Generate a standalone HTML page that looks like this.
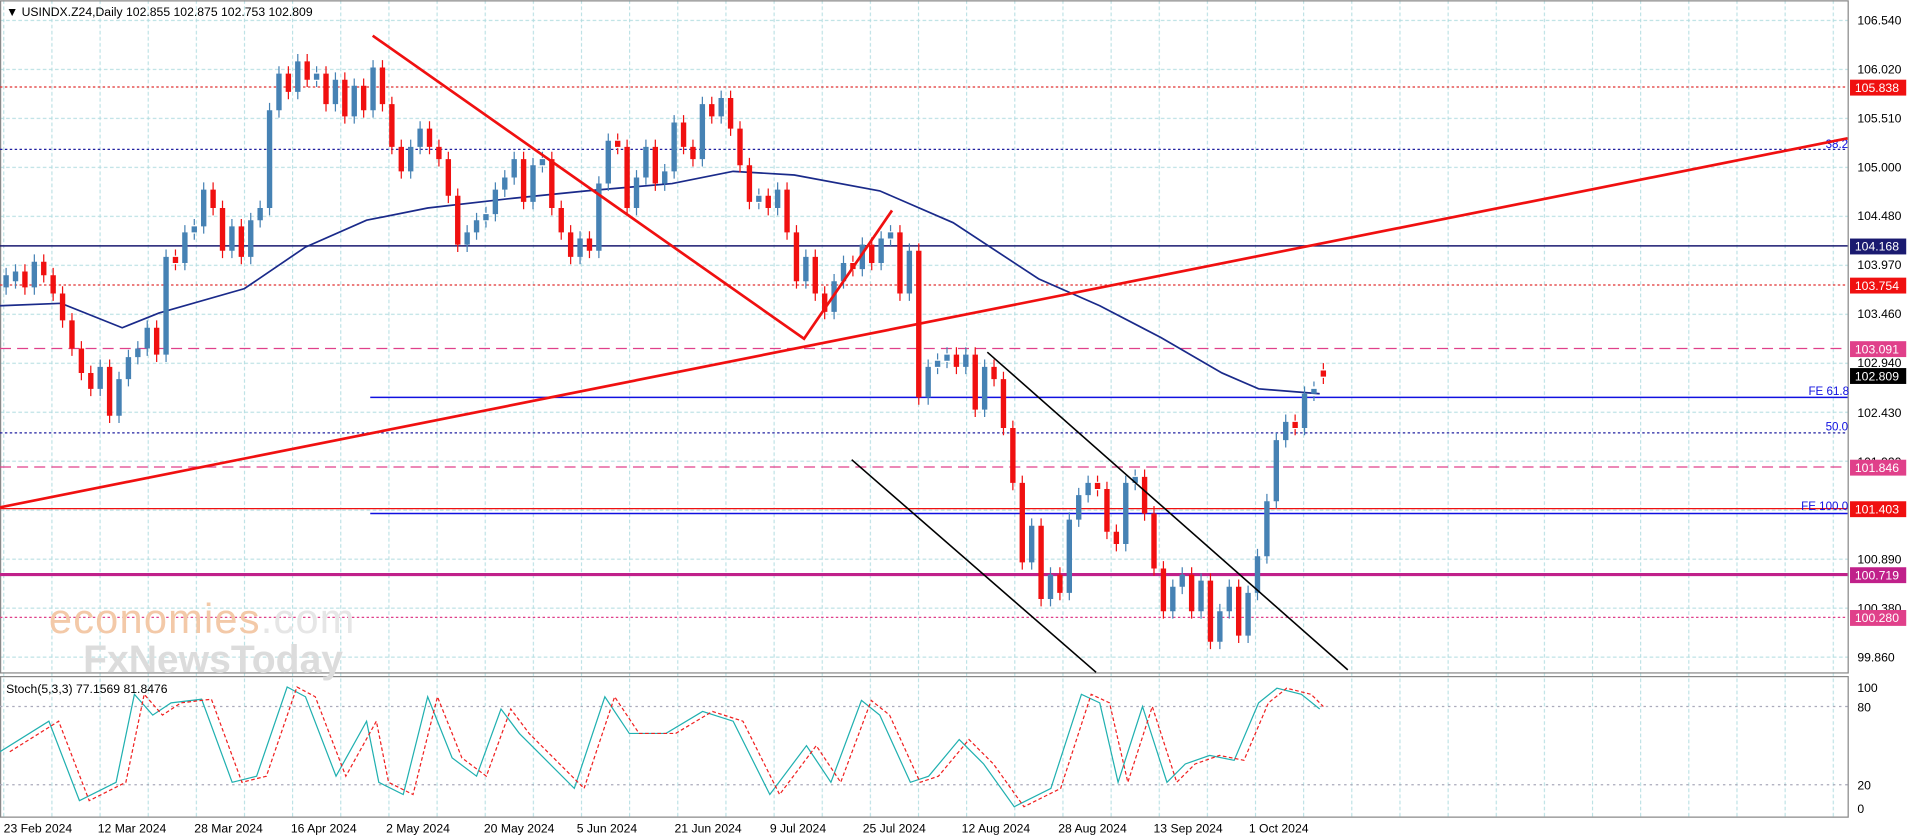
<!DOCTYPE html>
<html><head><meta charset="utf-8"><style>
html,body{margin:0;padding:0;background:#fff;overflow:hidden}
svg{display:block;font-family:"Liberation Sans",sans-serif}
</style></head><body>
<svg width="1916" height="840" viewBox="0 0 1568 687" xmlns="http://www.w3.org/2000/svg">
<defs>
<pattern id="gv" patternUnits="userSpaceOnUse" x="42" y="0" width="39.4" height="687"><line x1="0.5" y1="0" x2="0.5" y2="687" stroke="#b0dce0" stroke-width="0.8" stroke-dasharray="3,2"/></pattern>
<pattern id="gh" patternUnits="userSpaceOnUse" x="0" y="16" width="1512" height="40.08"><line x1="0" y1="0.5" x2="1512" y2="0.5" stroke="#b0dce0" stroke-width="0.8" stroke-dasharray="3,2"/></pattern>
<path id="bb" d="M5,225V235 M12.7,222V230 M28.1,214V235 M82,300V318 M97.4,310V340 M105.1,292V310 M112.8,285V292 M120.5,268V285 M135.9,210V290 M151.3,190V215 M159,185V190 M166.7,155V185 M189.8,185V205 M205.2,180V210 M212.9,170V180 M220.6,90V170 M228.3,60V90 M243.7,50V75 M259.1,60V65 M274.5,65V85 M289.9,70V95 M305.3,55V90 M336.1,120V140 M343.8,105V120 M382.3,190V200 M390,180V190 M397.7,175V180 M405.4,155V175 M413.1,145V155 M420.8,130V145 M436.2,135V165 M443.9,130V135 M474.7,195V210 M490.1,150V205 M497.8,115V150 M520.9,145V170 M528.6,120V145 M544,140V150 M551.7,100V140 M574.8,85V130 M590.2,80V95 M621,160V165 M636.4,155V170 M659.5,210V230 M682.6,230V255 M690.3,215V230 M705.7,200V220 M721.1,195V215 M728.8,190V195 M744.2,205V240 M759.6,300V325 M767.3,295V300 M775,290V295 M790.4,290V300 M805.8,300V335 M844.3,430V460 M859.7,470V490 M875.1,425V485 M882.8,405V425 M890.5,395V405 M921.3,395V445 M929,390V395 M959.8,480V500 M967.5,470V480 M982.9,475V500 M998.3,500V525 M1006,480V500 M1021.4,485V520 M1029.1,455V485 M1036.8,410V455 M1044.5,360V410 M1052.2,345V360 M1067.6,322V350 M1075.3,318V322"/>
<path id="rb" d="M20.4,222V235 M35.8,214V225 M43.5,225V240 M51.2,240V262 M58.9,262V285 M66.6,285V305 M74.3,305V318 M89.7,300V340 M128.2,268V290 M143.6,210V215 M174.4,155V170 M182.1,170V205 M197.5,185V210 M236,60V75 M251.4,50V65 M266.8,60V85 M282.2,65V95 M297.6,70V90 M313,55V85 M320.7,85V120 M328.4,120V140 M351.5,105V120 M359.2,120V130 M366.9,130V160 M374.6,160V200 M428.5,130V165 M451.6,130V170 M459.3,170V190 M467,190V210 M482.4,195V205 M505.5,115V120 M513.2,120V170 M536.3,120V150 M559.4,100V120 M567.1,120V130 M582.5,85V95 M597.9,80V105 M605.6,105V135 M613.3,135V165 M628.7,160V170 M644.1,155V190 M651.8,190V230 M667.2,210V240 M674.9,240V255 M698,215V220 M713.4,200V215 M736.5,190V240 M751.9,205V325 M782.7,290V300 M798.1,290V335 M813.5,300V310 M821.2,310V350 M828.9,350V395 M836.6,395V460 M852,430V490 M867.4,470V485 M898.2,395V400 M905.9,400V435 M913.6,435V445 M936.7,390V420 M944.4,420V465 M952.1,465V500 M975.2,470V500 M990.6,475V525 M1013.7,480V520 M1059.9,345V350 M1083,303V308"/>
</defs>
<rect width="1568" height="687" fill="#fff"/>
<rect x="0" y="0" width="1512" height="550" fill="url(#gh)"/>
<rect x="0" y="0" width="1512" height="668" fill="url(#gv)"/>
<rect x="0.5" y="0.5" width="1512" height="550" fill="none" stroke="#888"/>
<rect x="0.5" y="553.5" width="1512" height="115" fill="none" stroke="#888"/>
<line x1="0" y1="71" x2="1512" y2="71" stroke="#e03030" stroke-dasharray="2,2"/>
<line x1="0" y1="122" x2="1512" y2="122" stroke="#2020a0" stroke-dasharray="2,2"/>
<line x1="0" y1="201" x2="1512" y2="201" stroke="#1a1a70" stroke-width="1.3"/>
<line x1="0" y1="233" x2="1512" y2="233" stroke="#e03030" stroke-dasharray="2,2"/>
<line x1="0" y1="285" x2="1512" y2="285" stroke="#e0408a" stroke-dasharray="9,5"/>
<line x1="303" y1="325" x2="1512" y2="325" stroke="#1010e0" stroke-width="1.2"/>
<line x1="0" y1="354" x2="1512" y2="354" stroke="#2020a0" stroke-dasharray="2,2"/>
<line x1="0" y1="382" x2="1512" y2="382" stroke="#e0408a" stroke-dasharray="9,5"/>
<line x1="0" y1="416" x2="1512" y2="416" stroke="#f01010"/>
<line x1="303" y1="420" x2="1512" y2="420" stroke="#1010e0" stroke-width="1.2"/>
<line x1="0" y1="470" x2="1512" y2="470" stroke="#c0208a" stroke-width="2.5"/>
<line x1="0" y1="505" x2="1512" y2="505" stroke="#e0408a" stroke-dasharray="2,2"/>
<g font-size="9.5" fill="#1010e0">
<text x="1494" y="121">38.2</text>
<text x="1480" y="323">FE 61.8</text>
<text x="1494" y="352">50.0</text>
<text x="1474" y="417">FE 100.0</text>
</g>
<text x="40" y="518" font-size="34" fill="#f3c9a8" letter-spacing="1">economies<tspan fill="#e6e6e6">.com</tspan></text>
<text x="68" y="550" font-size="32" fill="#dcdcdc" font-weight="bold">FxNewsToday</text>
<polyline fill="none" stroke="#1a2a8a" stroke-width="1.4" points="0,250 50,248 100,268 130,256 200,236 250,202 300,180 350,170 420,162 480,156 550,150 600,140 650,143 720,156 780,182 850,228 900,250 950,276 1000,305 1030,318 1080,322"/>
<use href="#bb" transform="translate(0,-6)" fill="none" stroke="#4682b4" stroke-width="1"/>
<use href="#bb" transform="translate(0,6)" fill="none" stroke="#4682b4" stroke-width="1"/>
<use href="#rb" transform="translate(0,-6)" fill="none" stroke="#f01010" stroke-width="1"/>
<use href="#rb" transform="translate(0,6)" fill="none" stroke="#f01010" stroke-width="1"/>
<use href="#bb" fill="none" stroke="#4682b4" stroke-width="4.4"/>
<use href="#rb" fill="none" stroke="#f01010" stroke-width="4.4"/>
<line x1="0" y1="415" x2="1512" y2="113" stroke="#f01010" stroke-width="2.2"/>
<polyline fill="none" stroke="#f01010" stroke-width="2.2" points="305,29 658,277 730,172"/>
<line x1="808" y1="288" x2="1103" y2="548" stroke="#000" stroke-width="1.3"/>
<line x1="697" y1="376" x2="897" y2="550" stroke="#000" stroke-width="1.3"/>
<line x1="0" y1="578" x2="1512" y2="578" stroke="#aab" stroke-dasharray="2,3"/>
<line x1="0" y1="642" x2="1512" y2="642" stroke="#aab" stroke-dasharray="2,3"/>
<polyline fill="none" stroke="#20b0b0" stroke-width="1" points="0,615 40,590 65,655 95,640 110,568 125,585 140,575 165,572 190,640 210,635 235,562 250,570 275,635 300,590 310,640 330,650 350,570 370,620 390,635 410,580 425,600 445,620 470,645 495,570 515,600 545,600 575,582 600,590 630,650 660,610 680,640 705,573 720,585 745,640 760,635 785,605 805,625 830,660 860,645 885,568 900,575 915,640 935,578 955,640 970,625 990,618 1010,622 1030,575 1045,563 1065,568 1080,580"/>
<polyline fill="none" stroke="#f02020" stroke-width="1" stroke-dasharray="3,2" transform="translate(8,0)" points="0,615 40,590 65,655 95,640 110,568 125,585 140,575 165,572 190,640 210,635 235,562 250,570 275,635 300,590 310,640 330,650 350,570 370,620 390,635 410,580 425,600 445,620 470,645 495,570 515,600 545,600 575,582 600,590 630,650 660,610 680,640 705,573 720,585 745,640 760,635 785,605 805,625 830,660 860,645 885,568 900,575 915,640 935,578 955,640 970,625 990,618 1010,622 1030,575 1045,563 1065,568 1075,578"/>
<text x="5" y="567" font-size="10" fill="#000">Stoch(5,3,3) 77.1569 81.8476</text>
<text x="5" y="13" font-size="10" fill="#000">▼ USINDX.Z24,Daily  102.855 102.875 102.753 102.809</text>
<g font-size="10" fill="#000">
<text x="1520" y="20">106.540</text><text x="1520" y="60">106.020</text><text x="1520" y="100">105.510</text>
<text x="1520" y="140">105.000</text><text x="1520" y="180">104.480</text><text x="1520" y="220">103.970</text>
<text x="1520" y="260">103.460</text><text x="1520" y="300">102.940</text><text x="1520" y="341">102.430</text>
<text x="1520" y="381">101.920</text><text x="1520" y="421">101.400</text><text x="1520" y="461">100.890</text>
<text x="1520" y="501">100.380</text><text x="1520" y="541">99.860</text>
</g>
<g font-size="10" fill="#fff">
<rect x="1514" y="65" width="46" height="13" fill="#f01010"/><text x="1518" y="75">105.838</text>
<rect x="1514" y="195" width="46" height="13" fill="#1a1a70"/><text x="1518" y="205">104.168</text>
<rect x="1514" y="227" width="46" height="13" fill="#f01010"/><text x="1518" y="237">103.754</text>
<rect x="1514" y="279" width="46" height="13" fill="#e0408a"/><text x="1518" y="289">103.091</text>
<rect x="1514" y="301" width="46" height="13" fill="#000"/><text x="1518" y="311">102.809</text>
<rect x="1514" y="376" width="46" height="13" fill="#e0408a"/><text x="1518" y="386">101.846</text>
<rect x="1514" y="410" width="46" height="13" fill="#f01010"/><text x="1518" y="420">101.403</text>
<rect x="1514" y="464" width="46" height="13" fill="#c0208a"/><text x="1518" y="474">100.719</text>
<rect x="1514" y="499" width="46" height="13" fill="#e0408a"/><text x="1518" y="509">100.280</text>
</g>
<g font-size="10" fill="#000">
<text x="1520" y="566">100</text><text x="1520" y="582">80</text><text x="1520" y="646">20</text><text x="1520" y="665">0</text>
<text x="3" y="681">23 Feb 2024</text><text x="80" y="681">12 Mar 2024</text><text x="159" y="681">28 Mar 2024</text>
<text x="238" y="681">16 Apr 2024</text><text x="316" y="681">2 May 2024</text><text x="396" y="681">20 May 2024</text>
<text x="472" y="681">5 Jun 2024</text><text x="552" y="681">21 Jun 2024</text><text x="630" y="681">9 Jul 2024</text>
<text x="706" y="681">25 Jul 2024</text><text x="787" y="681">12 Aug 2024</text><text x="866" y="681">28 Aug 2024</text>
<text x="944" y="681">13 Sep 2024</text><text x="1022" y="681">1 Oct 2024</text>
</g>
</svg>
</body></html>
